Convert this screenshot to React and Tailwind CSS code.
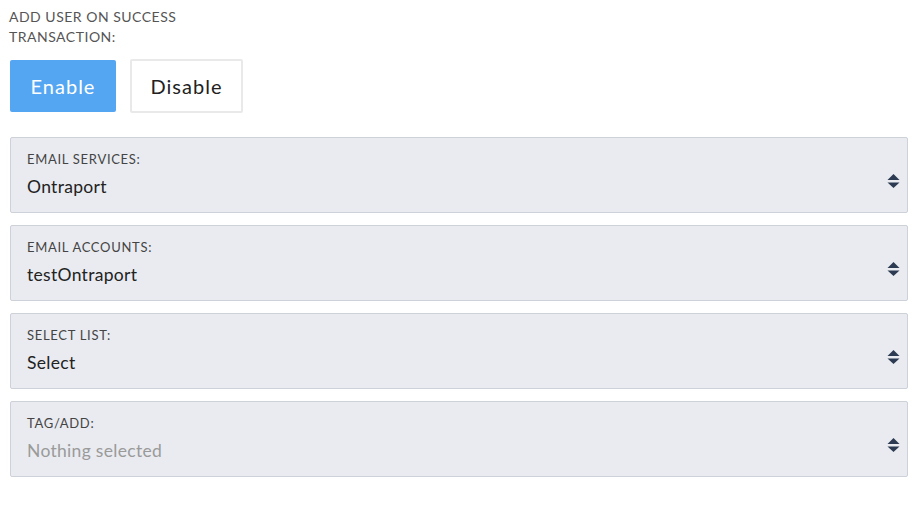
import React from 'react';

const font = { fontFamily: 'Lato, "Open Sans", sans-serif' };

function Arrows() {
  return (
    <svg width="13" height="14" viewBox="0 0 13 14" className="shrink-0">
      <path d="M6.5 0 L12.5 6 L0.5 6 Z" fill="#2c3a52" />
      <path d="M6.5 14 L12.5 8.5 L0.5 8.5 Z" fill="#2c3a52" />
    </svg>
  );
}

function SelectBox({ label, value, placeholder }) {
  return (
    <div className="h-[76px] rounded-[2px] border border-[#cdd1d8] bg-[#e9ebf0] pl-[16px] pr-[7px] pt-[12px] flex">
      <div className="flex-1">
        <div className="text-[13px] leading-[18px] text-[#444] tracking-[0.7px]">{label}</div>
        <div
          className={`mt-[8px] text-[17.5px] leading-[22px] tracking-[0.3px] ${
            placeholder ? 'text-[#9a9a9a]' : 'text-[#222]'
          }`}
        >
          {value}
        </div>
      </div>
      <div className="pt-[24px]">
        <Arrows />
      </div>
    </div>
  );
}

export default function App() {
  return (
    <div className="w-[920px] h-[515px] bg-white pl-[10px] pr-[12px]" style={font}>
      <div className="pt-[7px] text-[14px] leading-[20px] text-[#555] tracking-[0.5px] -ml-[1px]">
        ADD USER ON SUCCESS
        <br />
        TRANSACTION:
      </div>
      <div className="mt-[13px] flex gap-[14px]">
        <button className="w-[106px] h-[52px] rounded-[2px] bg-[#55a6f2] text-white text-[20px] tracking-[1px]">
          Enable
        </button>
        <button className="w-[113px] h-[54px] -mt-[1px] rounded-[2px] border-2 border-[#e9e9e9] bg-white text-[#222] text-[20px] tracking-[1px]">
          Disable
        </button>
      </div>
      <div className="mt-[24px] flex flex-col gap-[12px]">
        <SelectBox label="EMAIL SERVICES:" value="Ontraport" />
        <SelectBox label="EMAIL ACCOUNTS:" value="testOntraport" />
        <SelectBox label="SELECT LIST:" value="Select" />
        <SelectBox label="TAG/ADD:" value="Nothing selected" placeholder />
      </div>
    </div>
  );
}
